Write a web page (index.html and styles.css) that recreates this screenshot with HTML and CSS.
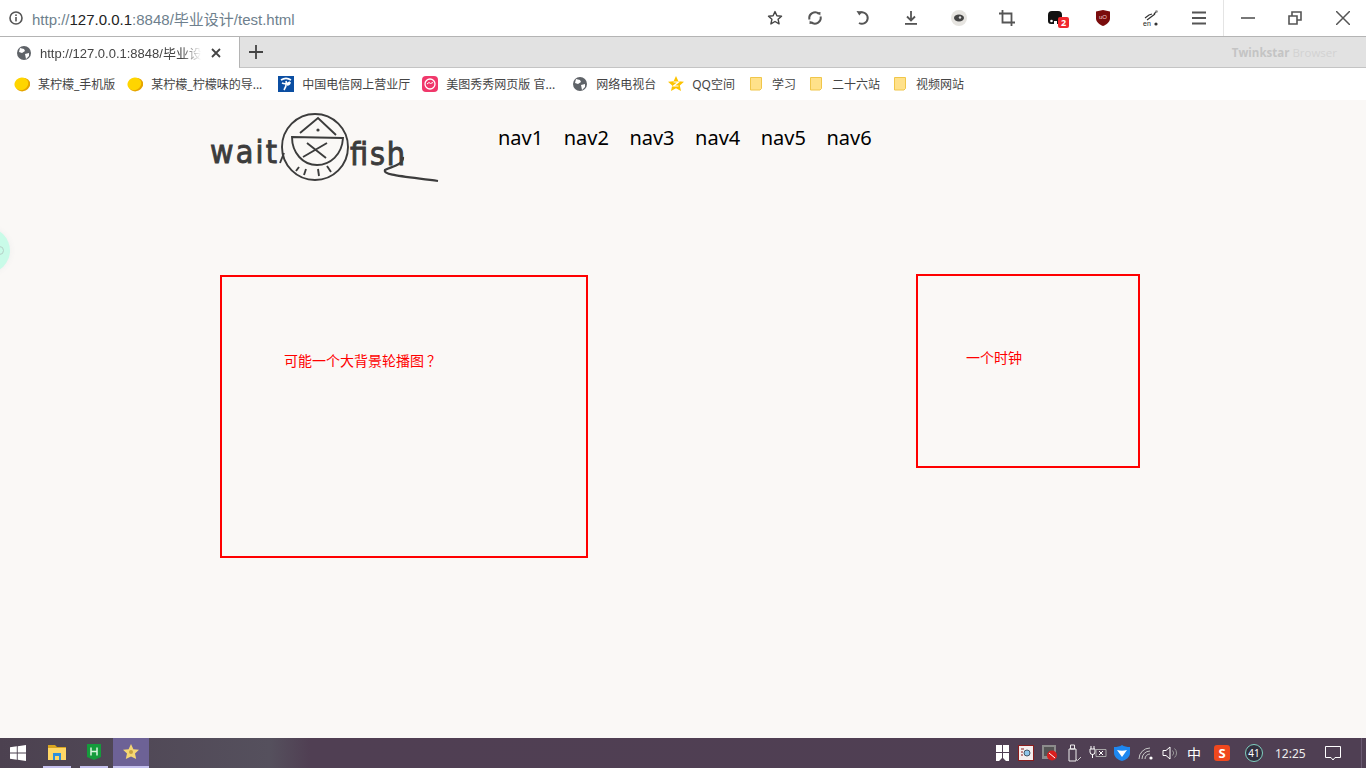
FILE: index.html
```html
<!DOCTYPE html>
<html lang="zh-CN">
<head>
  <meta charset="UTF-8">
  <title>test</title>
  <link rel="stylesheet" href="styles.css">
</head>
<body>

<div class="toolbar">
  <svg class="info" width="16" height="16" viewBox="0 0 16 16"><circle cx="8" cy="8" r="6" fill="none" stroke="#555" stroke-width="1.6"/><rect x="7.2" y="7" width="1.6" height="4.4" fill="#555"/><rect x="7.2" y="4.4" width="1.6" height="1.6" fill="#555"/></svg>
  <div class="url">http://<b>127.0.0.1</b>:8848/毕业设计/test.html</div>
  <span class="tool star-slot"><svg width="16" height="16" viewBox="0 0 16 16"><path d="M8 1.6l1.9 4.2 4.6.5-3.4 3 1 4.6L8 11.5l-4.1 2.4 1-4.6-3.4-3 4.6-.5z" fill="none" stroke="#444" stroke-width="1.4" stroke-linejoin="round"/></svg></span>
  <span class="tool"><svg width="16" height="16" viewBox="0 0 16 16"><path d="M2.500 9.500A5.700 5.700 0 0 1 12 4M13.500 6.500A5.700 5.700 0 0 1 4 12" fill="none" stroke="#555" stroke-width="2"/><path d="M10 2.500l3.500-.5-.2 3.500zM6 13.500l-3.500.5.200-3.500z" fill="#555"/></svg></span>
  <span class="tool"><svg width="16" height="16" viewBox="0 0 16 16"><path d="M5 2.500A5.800 5.800 0 1 1 4 13" fill="none" stroke="#555" stroke-width="2"/><path d="M1.500 1l6 .5-3.200 4z" fill="#555"/></svg></span>
  <span class="tool"><svg width="16" height="16" viewBox="0 0 16 16"><path d="M8 1v9M4 6.500l4 4 4-4" fill="none" stroke="#555" stroke-width="1.800"/><rect x="2" y="13" width="12" height="1.800" fill="#555"/></svg></span>
  <span class="tool"><svg width="18" height="18" viewBox="0 0 18 18"><circle cx="9" cy="9" r="8" fill="#e6e4e0"/><ellipse cx="9" cy="9" rx="5" ry="3.400" fill="#444"/><circle cx="10" cy="8.500" r="1.200" fill="#ddd"/></svg></span>
  <span class="tool"><svg width="16" height="16" viewBox="0 0 16 16"><path d="M3.500 0v12.500H16M0 3.500h12.500V16" fill="none" stroke="#555" stroke-width="1.800"/></svg></span>
  <span class="tool badge-tool">
    <svg width="14" height="14" viewBox="0 0 14 14"><path d="M0 4a4 4 0 0 1 4-4h6a4 4 0 0 1 4 4v6l-1 3H9v-3H6v3H3a3 3 0 0 1-3-3z" fill="#111"/><circle cx="3.500" cy="10" r="1.300" fill="#fff"/></svg>
    <span class="badge">2</span>
  </span>
  <span class="tool"><svg width="14" height="16" viewBox="0 0 14 16"><path d="M0 1.500l7-1.500 7 1.500v7c0 3.500-3.500 6-7 7.500-3.500-1.500-7-4-7-7.500z" fill="#7a0c0c"/><text x="7" y="8.500" class="shield-text">uO</text></svg></span>
  <span class="tool"><svg width="18" height="18" viewBox="0 0 18 18"><path d="M3 9l4-3 3-1M14 3l-2 2M5 11l8-6" fill="none" stroke="#333" stroke-width="1.200"/><circle cx="14.500" cy="2.500" r="1.300" fill="#888"/><circle cx="14" cy="15" r="1.600" fill="#333"/><text x="1" y="17" class="en-text">en</text></svg></span>
  <span class="tool"><svg width="16" height="16" viewBox="0 0 16 16"><path d="M1 2.500h14M1 8h14M1 13.500h14" stroke="#555" stroke-width="1.800"/></svg></span>
  <span class="divider"></span>
  <span class="tool win-min"><svg width="14" height="14" viewBox="0 0 14 14"><path d="M0 7h14" stroke="#555" stroke-width="1.600"/></svg></span>
  <span class="tool"><svg width="14" height="14" viewBox="0 0 14 14"><path d="M1 5h8v8H1zM4 5V1h9v8H9" fill="none" stroke="#555" stroke-width="1.600"/></svg></span>
  <span class="tool win-close"><svg width="14" height="14" viewBox="0 0 14 14"><path d="M0 0l14 14M14 0L0 14" stroke="#555" stroke-width="1.500"/></svg></span>
</div>

<div class="tabstrip">
  <div class="tab">
    <svg class="globe" width="14" height="14" viewBox="0 0 14 14"><circle cx="7" cy="7" r="7" fill="#5f6368"/><path d="M3 2l4 1 1 2-3 2-3-1zM8 8l4-1 0 3-3 3z" fill="#fff"/></svg>
    <span class="tab-title">http://127.0.0.1:8848/毕业设计/test.html</span>
    <svg class="tab-close" width="10" height="10" viewBox="0 0 10 10"><path d="M1 1l8 8M9 1L1 9" stroke="#444" stroke-width="1.800"/></svg>
  </div>
  <div class="tab-rest">
    <svg class="plus" width="16" height="16" viewBox="0 0 16 16"><path d="M8 1v14M1 8h14" stroke="#444" stroke-width="1.800"/></svg>
    <div class="brand"><b>Twinkstar</b> Browser</div>
  </div>
</div>

<div class="bookmarks">
  <a class="bm"><svg width="16" height="16" viewBox="0 0 16 16"><ellipse cx="8.500" cy="9" rx="7.500" ry="6.500" transform="rotate(-25 8 8)" fill="#e5a400"/><ellipse cx="7.500" cy="7.500" rx="7" ry="6.200" transform="rotate(-25 8 8)" fill="#ffd500"/></svg>某柠檬_手机版</a>
  <a class="bm"><svg width="16" height="16" viewBox="0 0 16 16"><ellipse cx="8.500" cy="9" rx="7.500" ry="6.500" transform="rotate(-25 8 8)" fill="#e5a400"/><ellipse cx="7.500" cy="7.500" rx="7" ry="6.200" transform="rotate(-25 8 8)" fill="#ffd500"/></svg>某柠檬_柠檬味的导...</a>
  <a class="bm bm-telecom"><svg width="16" height="16" viewBox="0 0 16 16"><rect width="16" height="16" fill="#0b4ea2"/><path d="M3 4c3-2 7-2 10 0M4 7c2 1 5 1 8-1M8 5c1 4 0 6-2 9M9 9c2 0 3-1 3-3" fill="none" stroke="#fff" stroke-width="1.600"/></svg>中国电信网上营业厅</a>
  <a class="bm"><svg width="16" height="16" viewBox="0 0 16 16"><rect width="16" height="16" rx="4" fill="#f0386b"/><circle cx="8" cy="8" r="5" fill="none" stroke="#fff" stroke-width="1.300"/><path d="M5 8l2-1.500 1.500 1 2.500-1" fill="none" stroke="#fff"/></svg>美图秀秀网页版 官...</a>
  <a class="bm bm-globe"><svg width="14" height="14" viewBox="0 0 14 14"><circle cx="7" cy="7" r="7" fill="#5f6368"/><path d="M3 2l4 1 1 2-3 2-3-1zM8 8l4-1 0 3-3 3z" fill="#fff"/></svg>网络电视台</a>
  <a class="bm"><svg width="16" height="16" viewBox="0 0 16 16"><path d="M8 0l2.400 5.200 5.600.6-4.200 3.700 1.200 5.500L8 12.200 3 15l1.200-5.500L0 5.800l5.600-.6z" fill="#fdc300"/><path d="M5.500 6h5l-5 4h5" fill="none" stroke="#fff" stroke-width="1.200"/></svg>QQ空间</a>
  <a class="bm bm-first-folder"><svg width="16" height="16" viewBox="0 0 16 16"><path d="M2.500 1.500h11v11l-1.500 1.500h-9.500z" fill="#ffe18a" stroke="#f0c64a"/></svg>学习</a>
  <a class="bm"><svg width="16" height="16" viewBox="0 0 16 16"><path d="M2.500 1.500h11v11l-1.500 1.500h-9.500z" fill="#ffe18a" stroke="#f0c64a"/></svg>二十六站</a>
  <a class="bm"><svg width="16" height="16" viewBox="0 0 16 16"><path d="M2.500 1.500h11v11l-1.500 1.500h-9.500z" fill="#ffe18a" stroke="#f0c64a"/></svg>视频网站</a>
</div>

<div class="page">
  <div class="float-ball"><span class="ball-mark"></span></div>

  <div class="header">
    <svg class="logo" width="250" height="85" viewBox="0 0 250 85">
      <text class="logo-text" x="10" y="58" textLength="67">wait</text>
      <text class="logo-text" x="150" y="60" textLength="55">fish</text>
      <g fill="none" stroke="#3c3c3c" stroke-width="1.900">
        <circle cx="115" cy="42" r="33"/>
        <path d="M100 28L118 13 136 30"/>
        <path d="M92 32L143 33C142 50 130 60 117 60 103 60 92 48 92 32z"/>
        <path d="M103 52L127 38M107 38L126 53"/>
        <path d="M99 62L96 66M106 64L104 70M118 64L119 71M127 61L131 67"/>
        <path d="M80 58L84 48"/>
        <path d="M203 52C204 60 190 62 185 65 183 70 200 71 238 76" stroke-width="2.200"/>
      </g>
      <circle cx="118" cy="25" r="1.600" fill="#3c3c3c"/>
    </svg>
    <ul class="nav">
      <li>nav1</li>
      <li>nav2</li>
      <li>nav3</li>
      <li>nav4</li>
      <li>nav5</li>
      <li>nav6</li>
    </ul>
  </div>

  <div class="main">
    <div class="box box-big">可能一个大背景轮播图<span class="qmark">？</span></div>
    <div class="box box-clock">一个时钟</div>
  </div>
</div>

<div class="taskbar">
  <svg class="start" width="16" height="16" viewBox="0 0 16 16"><path d="M0 2.300l6.800-1v6.200H0zM7.700 1.200L16 0v7.500H7.700zM0 8.500h6.800v6.200l-6.800-1zM7.700 8.500H16V16l-8.300-1.200z" fill="#fff"/></svg>
  <span class="task task-open"><svg width="18" height="16" viewBox="0 0 18 16"><path d="M0 1h7l2 2h9v3H0z" fill="#d9a520"/><rect y="4" width="18" height="12" fill="#ffd766"/><path d="M5 9h8v7h-2v-4H7v4H5z" fill="#2f8fdc"/></svg></span>
  <span class="task task-open"><svg width="14" height="16" viewBox="0 0 14 16"><path d="M0 0h14v13l-7 3-7-3z" fill="#159b3c"/><path d="M4 3.500v8M10 3.500v8M4 7.500h6" stroke="#d8f5dd" stroke-width="1.500" fill="none"/></svg></span>
  <span class="task task-active"><svg width="16" height="16" viewBox="0 0 16 16"><path d="M8 0l2.400 5.200 5.600.6-4 3.700 1.200 5.500L8 12.500 2.800 15 4 9.500 0 5.800l5.600-.6z" fill="#f5d673"/><circle cx="8" cy="8" r="2" fill="#c9a23f"/></svg></span>

  <div class="tray">
    <span class="tray-item"><svg width="13" height="16" viewBox="0 0 13 16"><path d="M0 0h6v7H0zM7 0h6v7H7zM0 8h6v5L3 16H0zM7 8h6v8h-3l-3-3z" fill="#fff"/></svg></span>
    <span class="tray-item"><svg width="16" height="16" viewBox="0 0 16 16"><rect x=".500" y=".500" width="15" height="15" fill="#f4eeee" stroke="#8c1d1d"/><circle cx="9" cy="8" r="3" fill="#8fc6ea" stroke="#456"/><path d="M3 4h3M3 7h2M3 10h2" stroke="#8c1d1d"/></svg></span>
    <span class="tray-item"><svg width="16" height="16" viewBox="0 0 16 16"><rect width="14" height="14" fill="#8c8c8c"/><rect x="2" y="2" width="10" height="9" fill="#555"/><circle cx="10" cy="10.500" r="5" fill="#d81e1e"/><path d="M7 8l6 5" stroke="#fff"/></svg></span>
    <span class="tray-item"><svg width="16" height="18" viewBox="0 0 16 18"><path d="M4.500 1h4v4h-4zM3 5h7v12H3z" fill="none" stroke="#eee"/><path d="M10 15l1.500 1.500L15 13" fill="none" stroke="#ccc"/></svg></span>
    <span class="tray-item"><svg width="18" height="14" viewBox="0 0 18 14"><path d="M2 0v3M5 0v3M1 3h5v3a2.500 2.500 0 0 1-5 0zM3.500 8v4" fill="none" stroke="#fff"/><path d="M7 3.500h10v7H7z" fill="none" stroke="#aaa"/><path d="M10 5l4 4M14 5l-4 4" stroke="#fff"/></svg></span>
    <span class="tray-item"><svg width="16" height="16" viewBox="0 0 16 16"><path d="M8 0c2 1.500 5 2 8 2v6c0 4-4 7-8 8-4-1-8-4-8-8V2c3 0 6-.5 8-2z" fill="#1e88f0"/><path d="M3 5c3 1 7 1 10 0l-5 7z" fill="#fff"/></svg></span>
    <span class="tray-item"><svg width="16" height="14" viewBox="0 0 16 14"><path d="M1 13A11 11 0 0 1 12 2M4 13a8 8 0 0 1 8-8M7 13a5 5 0 0 1 5-5" fill="none" stroke="#c8c8c8"/><circle cx="13" cy="12" r="1.600" fill="#fff"/></svg></span>
    <span class="tray-item"><svg width="16" height="14" viewBox="0 0 16 14"><path d="M1 4.500h3L8 1v12L4 9.500H1z" fill="none" stroke="#fff"/><path d="M10.500 4.500a3.500 3.500 0 0 1 0 5M12.500 2.500a6 6 0 0 1 0 9" fill="none" stroke="#999"/></svg></span>
    <span class="tray-item tray-ime">中</span>
    <span class="tray-item tray-sogou"><span class="sogou">S</span></span>
    <span class="tray-item tray-ring"><span class="ring">41</span></span>
    <span class="clock">12:25</span>
    <span class="tray-item tray-notice"><svg width="16" height="15" viewBox="0 0 16 15"><path d="M.5.500h15v11H10L8 14l-2-2.500H.5z" fill="none" stroke="#fff"/></svg></span>
    <span class="show-desktop"></span>
  </div>
</div>

</body>
</html>
```

FILE: styles.css
```css
* {
  padding: 0;
  margin: 0;
  box-sizing: border-box;
}

html, body {
  height: 100%;
}

body {
  display: flex;
  flex-direction: column;
  height: 768px;
  overflow: hidden;
  font-family: "Noto Sans", "Noto Sans CJK SC", sans-serif;
  background: #faf8f6;
}

svg {
  display: block;
  flex-shrink: 0;
}

/* browser chrome */
.toolbar {
  display: flex;
  align-items: center;
  height: 37px;
  padding-left: 8px;
  background: #fff;
  border-bottom: 1px solid #b4b4b4;
}

.url {
  flex: 1;
  margin-left: 8px;
  font-family: "Liberation Sans", "Noto Sans CJK SC", sans-serif;
  font-size: 15px;
  color: #6e7f8d;
}

.url b {
  font-weight: normal;
  color: #222;
}

.tool {
  display: flex;
  justify-content: center;
  width: 48px;
}

.star-slot {
  width: 32px;
}

.win-min, .win-close {
  width: 47px;
}

.badge-tool {
  position: relative;
}

.badge {
  position: absolute;
  left: 27px;
  top: 6px;
  width: 11px;
  height: 11px;
  border-radius: 2px;
  background: #f0282d;
  color: #fff;
  font-size: 9px;
  font-weight: bold;
  line-height: 11px;
  text-align: center;
}

.shield-text {
  font-family: "Liberation Sans", sans-serif;
  font-size: 6px;
  fill: #f2d0d0;
  text-anchor: middle;
}

.en-text {
  font-family: "Liberation Sans", sans-serif;
  font-size: 7px;
  fill: #222;
}

.divider {
  width: 1px;
  height: 36px;
  background: #e4e4e4;
}

.tabstrip {
  display: flex;
  height: 31px;
  background: #fff;
}

.tab {
  display: flex;
  align-items: center;
  width: 239px;
  padding-left: 17px;
}

.tab-title {
  width: 161px;
  margin-left: 9px;
  overflow: hidden;
  white-space: nowrap;
  font-family: "Liberation Sans", "Noto Sans CJK SC", sans-serif;
  font-size: 13px;
  color: #444;
  -webkit-mask-image: linear-gradient(to right, #000 88%, transparent);
  mask-image: linear-gradient(to right, #000 88%, transparent);
}

.tab-close {
  margin-left: 10px;
}

.tab-rest {
  flex: 1;
  display: flex;
  align-items: center;
  justify-content: space-between;
  padding: 0 29px 0 8px;
  background: #e2e2e2;
  border-left: 1px solid #b4b4b4;
  border-bottom: 1px solid #c4c4c4;
}

.brand {
  font-family: "Open Sans", sans-serif;
  font-size: 11.500px;
  color: #d2d2d2;
}

.brand b {
  color: #c4c4c4;
}

.bookmarks {
  display: flex;
  align-items: center;
  gap: 12px;
  height: 32px;
  padding-left: 14px;
  background: #fff;
}

.bm {
  display: flex;
  align-items: center;
  gap: 8px;
  font-size: 12px;
  color: #444;
  white-space: nowrap;
}

.bm-telecom {
  margin-left: 4px;
}

.bm-globe {
  margin-left: 6px;
  gap: 9px;
}

.bm-first-folder {
  margin-left: 1px;
}

/* the page itself */
.page {
  position: relative;
  flex: 1;
  background: #faf8f6;
}

.float-ball {
  position: absolute;
  left: -35px;
  top: 128px;
  width: 45px;
  height: 45px;
  border-radius: 50%;
  background: #c9fbe8;
  box-shadow: 0 0 6px #eee;
}

.ball-mark {
  position: absolute;
  left: 30px;
  top: 18px;
  width: 9px;
  height: 9px;
  border: 1px solid #b5cfc6;
  border-radius: 50%;
}

.header {
  display: flex;
  align-items: flex-start;
  padding: 5px 0 0 200px;
}

.nav {
  display: flex;
  gap: 20.500px;
  margin: 18px 0 0 48px;
  list-style: none;
  font-size: 20px;
  line-height: 30px;
  color: #000;
}

.logo-text {
  font-family: "DejaVu Sans Condensed", "DejaVu Sans", sans-serif;
  font-stretch: condensed;
  font-size: 32px;
  fill: #3c3c3c;
  stroke: #3c3c3c;
  stroke-width: 0.900px;
}

.main {
  display: flex;
  align-items: flex-start;
  gap: 328px;
  padding: 84px 0 0 220px;
}

.box {
  border: 2px solid #f00;
  color: #f00;
  font-size: 14px;
  line-height: 20px;
}

.box-big {
  width: 368px;
  height: 283px;
  margin-top: 1px;
  padding: 74px 0 0 62px;
}

.qmark {
  margin-left: 3px;
}

.box-clock {
  width: 224px;
  height: 194px;
  padding: 72px 0 0 48px;
}

/* windows taskbar */
.taskbar {
  display: flex;
  align-items: stretch;
  height: 30px;
  background: linear-gradient(to right, #4c4150 0, #55505d 270px, #503f53 310px, #4f3f53 100%);
  color: #fff;
}

.start {
  align-self: center;
  margin: 0 17px 0 10px;
}

.task {
  display: flex;
  align-items: center;
  justify-content: center;
  width: 28px;
  margin-right: 9px;
  border-bottom: 2px solid transparent;
}

.task-open {
  border-bottom-color: #c6c2f0;
}

.task-active {
  width: 36px;
  margin-left: -4px;
  background: #6d6296;
  border-bottom-color: #c6c2f0;
}

.tray {
  display: flex;
  align-items: center;
  margin-left: auto;
}

.tray-item {
  display: flex;
  align-items: center;
  justify-content: center;
  width: 24px;
}

.tray-ime {
  font-size: 14px;
}

.tray-sogou {
  margin-left: 4px;
}

.sogou {
  display: block;
  width: 16px;
  height: 16px;
  border-radius: 3px;
  background: #f0481e;
  color: #fff;
  font-size: 13px;
  font-weight: bold;
  line-height: 16px;
  text-align: center;
}

.tray-ring {
  margin-left: 8px;
}

.ring {
  display: block;
  width: 18px;
  height: 18px;
  border-radius: 50%;
  border: 1px solid #7fd0c0;
  background: #33303f;
  font-size: 10px;
  line-height: 16px;
  text-align: center;
}

.clock {
  width: 30px;
  margin-left: 9px;
  font-size: 12px;
  color: #eee;
}

.tray-notice {
  width: 46px;
  margin: 0 5px;
}

.show-desktop {
  width: 5px;
  height: 100%;
  border-left: 1px solid #6a5a72;
}
```
